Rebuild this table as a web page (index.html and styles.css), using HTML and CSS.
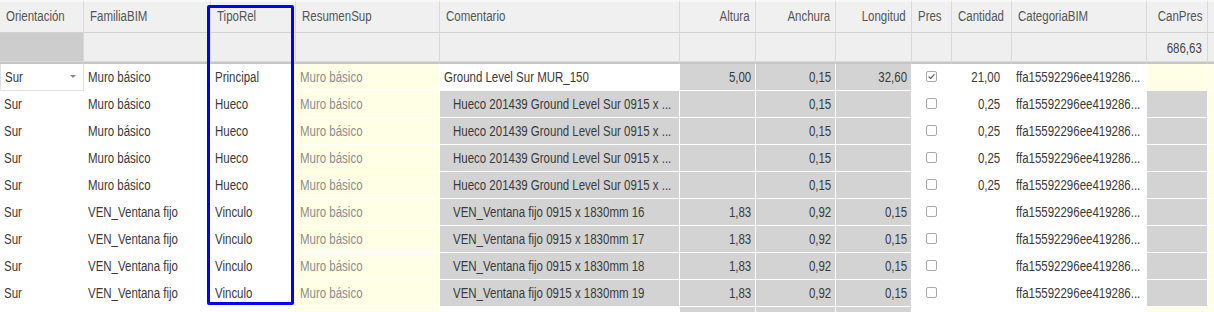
FILE: index.html
```html
<!DOCTYPE html>
<html lang="es">
<head>
<meta charset="utf-8">
<title>Grid</title>
<link rel="stylesheet" href="styles.css">
</head>
<body>
<div class="grid">
  <div class="row head">
    <div class="c"><span class="t">Orientación</span></div>
    <div class="c"><span class="t">FamiliaBIM</span></div>
    <div class="c"><span class="t">TipoRel</span></div>
    <div class="c"><span class="t">ResumenSup</span></div>
    <div class="c"><span class="t">Comentario</span></div>
    <div class="c num"><span class="t">Altura</span></div>
    <div class="c num"><span class="t">Anchura</span></div>
    <div class="c num"><span class="t">Longitud</span></div>
    <div class="c"><span class="t">Pres</span></div>
    <div class="c"><span class="t">Cantidad</span></div>
    <div class="c"><span class="t">CategoriaBIM</span></div>
    <div class="c num"><span class="t">CanPres</span></div>
    <div class="c"></div>
  </div>
  <div class="row filter">
    <div class="c dark"></div>
    <div class="c"></div>
    <div class="c"></div>
    <div class="c"></div>
    <div class="c"></div>
    <div class="c"></div>
    <div class="c"></div>
    <div class="c"></div>
    <div class="c"></div>
    <div class="c"></div>
    <div class="c"></div>
    <div class="c num"><span class="t">686,63</span></div>
    <div class="c"></div>
  </div>

  <div class="row data">
    <div class="c edit"><span class="t">Sur</span><span class="arrow"></span></div>
    <div class="c"><span class="t">Muro básico</span></div>
    <div class="c"><span class="t">Principal</span></div>
    <div class="c y sub"><span class="t">Muro básico</span></div>
    <div class="c"><span class="t">Ground Level Sur MUR_150</span></div>
    <div class="c g num"><span class="t">5,00</span></div>
    <div class="c g num"><span class="t">0,15</span></div>
    <div class="c g num"><span class="t">32,60</span></div>
    <div class="c chk"><span class="box"><svg viewBox="0 0 11 11" width="11" height="11"><path d="M2.6 5.6 L4.6 7.5 L8.4 3.4" fill="none" stroke="#5a5a5a" stroke-width="1.2"/></svg></span></div>
    <div class="c num qty"><span class="t">21,00</span></div>
    <div class="c"><span class="t">ffa15592296ee419286...</span></div>
    <div class="c y"></div>
    <div class="c y"></div>
  </div>

  <div class="row data">
    <div class="c"><span class="t">Sur</span></div>
    <div class="c"><span class="t">Muro básico</span></div>
    <div class="c"><span class="t">Hueco</span></div>
    <div class="c y sub"><span class="t">Muro básico</span></div>
    <div class="c g ind"><span class="t">Hueco 201439 Ground Level Sur 0915 x ...</span></div>
    <div class="c g"></div>
    <div class="c g num"><span class="t">0,15</span></div>
    <div class="c g"></div>
    <div class="c chk"><span class="box"></span></div>
    <div class="c num qty"><span class="t">0,25</span></div>
    <div class="c"><span class="t">ffa15592296ee419286...</span></div>
    <div class="c g"></div>
    <div class="c y"></div>
  </div>
  <div class="row data">
    <div class="c"><span class="t">Sur</span></div>
    <div class="c"><span class="t">Muro básico</span></div>
    <div class="c"><span class="t">Hueco</span></div>
    <div class="c y sub"><span class="t">Muro básico</span></div>
    <div class="c g ind"><span class="t">Hueco 201439 Ground Level Sur 0915 x ...</span></div>
    <div class="c g"></div>
    <div class="c g num"><span class="t">0,15</span></div>
    <div class="c g"></div>
    <div class="c chk"><span class="box"></span></div>
    <div class="c num qty"><span class="t">0,25</span></div>
    <div class="c"><span class="t">ffa15592296ee419286...</span></div>
    <div class="c g"></div>
    <div class="c y"></div>
  </div>
  <div class="row data">
    <div class="c"><span class="t">Sur</span></div>
    <div class="c"><span class="t">Muro básico</span></div>
    <div class="c"><span class="t">Hueco</span></div>
    <div class="c y sub"><span class="t">Muro básico</span></div>
    <div class="c g ind"><span class="t">Hueco 201439 Ground Level Sur 0915 x ...</span></div>
    <div class="c g"></div>
    <div class="c g num"><span class="t">0,15</span></div>
    <div class="c g"></div>
    <div class="c chk"><span class="box"></span></div>
    <div class="c num qty"><span class="t">0,25</span></div>
    <div class="c"><span class="t">ffa15592296ee419286...</span></div>
    <div class="c g"></div>
    <div class="c y"></div>
  </div>
  <div class="row data">
    <div class="c"><span class="t">Sur</span></div>
    <div class="c"><span class="t">Muro básico</span></div>
    <div class="c"><span class="t">Hueco</span></div>
    <div class="c y sub"><span class="t">Muro básico</span></div>
    <div class="c g ind"><span class="t">Hueco 201439 Ground Level Sur 0915 x ...</span></div>
    <div class="c g"></div>
    <div class="c g num"><span class="t">0,15</span></div>
    <div class="c g"></div>
    <div class="c chk"><span class="box"></span></div>
    <div class="c num qty"><span class="t">0,25</span></div>
    <div class="c"><span class="t">ffa15592296ee419286...</span></div>
    <div class="c g"></div>
    <div class="c y"></div>
  </div>

  <div class="row data">
    <div class="c"><span class="t">Sur</span></div>
    <div class="c"><span class="t">VEN_Ventana fijo</span></div>
    <div class="c"><span class="t">Vinculo</span></div>
    <div class="c y sub"><span class="t">Muro básico</span></div>
    <div class="c g ind"><span class="t">VEN_Ventana fijo 0915 x 1830mm 16</span></div>
    <div class="c g num"><span class="t">1,83</span></div>
    <div class="c g num"><span class="t">0,92</span></div>
    <div class="c g num"><span class="t">0,15</span></div>
    <div class="c chk"><span class="box"></span></div>
    <div class="c num qty"></div>
    <div class="c"><span class="t">ffa15592296ee419286...</span></div>
    <div class="c g"></div>
    <div class="c y"></div>
  </div>
  <div class="row data">
    <div class="c"><span class="t">Sur</span></div>
    <div class="c"><span class="t">VEN_Ventana fijo</span></div>
    <div class="c"><span class="t">Vinculo</span></div>
    <div class="c y sub"><span class="t">Muro básico</span></div>
    <div class="c g ind"><span class="t">VEN_Ventana fijo 0915 x 1830mm 17</span></div>
    <div class="c g num"><span class="t">1,83</span></div>
    <div class="c g num"><span class="t">0,92</span></div>
    <div class="c g num"><span class="t">0,15</span></div>
    <div class="c chk"><span class="box"></span></div>
    <div class="c num qty"></div>
    <div class="c"><span class="t">ffa15592296ee419286...</span></div>
    <div class="c g"></div>
    <div class="c y"></div>
  </div>
  <div class="row data">
    <div class="c"><span class="t">Sur</span></div>
    <div class="c"><span class="t">VEN_Ventana fijo</span></div>
    <div class="c"><span class="t">Vinculo</span></div>
    <div class="c y sub"><span class="t">Muro básico</span></div>
    <div class="c g ind"><span class="t">VEN_Ventana fijo 0915 x 1830mm 18</span></div>
    <div class="c g num"><span class="t">1,83</span></div>
    <div class="c g num"><span class="t">0,92</span></div>
    <div class="c g num"><span class="t">0,15</span></div>
    <div class="c chk"><span class="box"></span></div>
    <div class="c num qty"></div>
    <div class="c"><span class="t">ffa15592296ee419286...</span></div>
    <div class="c g"></div>
    <div class="c y"></div>
  </div>
  <div class="row data">
    <div class="c"><span class="t">Sur</span></div>
    <div class="c"><span class="t">VEN_Ventana fijo</span></div>
    <div class="c"><span class="t">Vinculo</span></div>
    <div class="c y sub"><span class="t">Muro básico</span></div>
    <div class="c g ind"><span class="t">VEN_Ventana fijo 0915 x 1830mm 19</span></div>
    <div class="c g num"><span class="t">1,83</span></div>
    <div class="c g num"><span class="t">0,92</span></div>
    <div class="c g num"><span class="t">0,15</span></div>
    <div class="c chk"><span class="box"></span></div>
    <div class="c num qty"></div>
    <div class="c"><span class="t">ffa15592296ee419286...</span></div>
    <div class="c g"></div>
    <div class="c y"></div>
  </div>
  <div class="row data last">
    <div class="c"></div>
    <div class="c"></div>
    <div class="c"></div>
    <div class="c y"></div>
    <div class="c"></div>
    <div class="c g"></div>
    <div class="c g"></div>
    <div class="c g"></div>
    <div class="c"></div>
    <div class="c"></div>
    <div class="c"></div>
    <div class="c y"></div>
    <div class="c y"></div>
  </div>

  <div class="highlight"></div>
</div>
</body>
</html>
```

FILE: styles.css
```css
html, body {
  margin: 0;
  padding: 0;
  background: #ffffff;
  overflow: hidden;
}

.grid {
  position: relative;
  width: 1214px;
  height: 312px;
  overflow: hidden;
  font-family: "Liberation Sans", Arial, sans-serif;
  font-size: 14px;
  color: #3a3a3a;
}

.row {
  display: grid;
  grid-template-columns: 84px 127px 85px 144px 240px 76px 80px 76px 40px 60px 135px 61px 1fr;
}

.c {
  box-sizing: border-box;
  display: flex;
  align-items: center;
  white-space: nowrap;
  padding: 0 4px;
  border-right: 1px solid #ffffff;
  border-bottom: 1px solid #ffffff;
  position: relative;
  min-width: 0;
}

/* narrow text: the UI font is a condensed sans */
.t {
  display: inline-block;
  flex: none;
  transform: scaleX(0.82);
  transform-origin: left center;
}
.num {
  justify-content: flex-end;
}
.num .t {
  transform-origin: right center;
}

/* header */
.head .c {
  height: 33px;
  background: #f0f0f0;
  border-top: 2px solid #f8f8f8;
  border-right: 1px solid #d9d9d9;
  border-bottom: 1px solid #d2d2d2;
  padding: 0 5px 2px 6px;
  color: #555555;
}
.head .num { padding-right: 5px; }

/* filter row */
.filter .c {
  height: 31px;
  background: #efefef;
  border-right: 1px solid #d9d9d9;
  border-bottom: 2px solid #c6c6c6;
  box-shadow: inset 0 -1px 0 #dcdcdc;
  padding: 0 5px;
  color: #444444;
}
.filter .c.dark { background: #cdcdcd; }

/* data */
.data .c { height: 27px; }

.g { background: #d3d3d3; }
.y { background: #ffffe6; }
.sub { color: #8d8d8d; }
.ind { padding-left: 13px; }
.data .num { padding-right: 4px; }
.data .qty { padding-right: 11px; }

.edit {
  border: 1px solid #e2e2e2 !important;
  border-top: none !important;
}
.arrow {
  position: absolute;
  left: 69px;
  top: 11px;
  width: 0;
  height: 0;
  border-left: 3px solid transparent;
  border-right: 3px solid transparent;
  border-top: 3px solid #8a8a8a;
}

.chk { justify-content: center; }
.box {
  box-sizing: border-box;
  display: block;
  width: 11px;
  height: 11px;
  border: 1px solid #a9a9a9;
  border-radius: 2px;
  background: #ffffff;
  position: relative;
  top: -1px;
}
.box svg {
  position: absolute;
  left: -1px;
  top: -1px;
}

.highlight {
  position: absolute;
  left: 207px;
  top: 5px;
  width: 87px;
  height: 300px;
  box-sizing: border-box;
  border: 3px solid #0000f2;
  border-radius: 2px;
  pointer-events: none;
}
```
